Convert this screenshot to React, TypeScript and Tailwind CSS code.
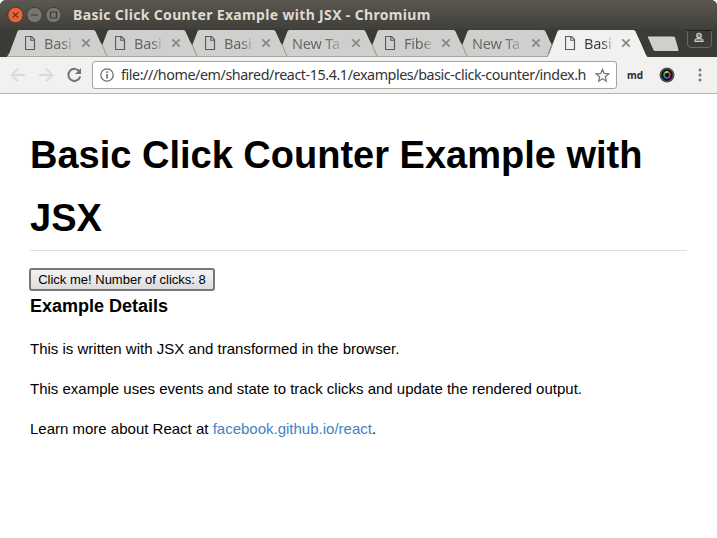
import { useState } from "react";

const tabs = [
  { title: "Basi", page: true, layer: "z-[7]" },
  { title: "Basi", page: true, layer: "z-[6]" },
  { title: "Basi", page: true, layer: "z-[5]" },
  { title: "New Ta", page: false, layer: "z-[4]" },
  { title: "Fibe", page: true, layer: "z-[3]" },
  { title: "New Ta", page: false, layer: "z-[2]" },
  { title: "Basi", page: true, active: true, layer: "z-[8]" },
];

function PageIcon() {
  return (
    <svg width="12" height="16" viewBox="0 0 12 16" fill="none" stroke="#5a5a5a" className="shrink-0">
      <path d="M.5 1.500H6.500L9.500 4.500V14.500H.5Z" strokeWidth="1.200" />
      <path d="M5.800 1.500V5.300H9.500" strokeWidth="1.100" />
    </svg>
  );
}

function Tab({ title, page, active, layer }: { title: string; page: boolean; active?: boolean; layer: string }) {
  return (
    <div className={`relative h-7 w-[90px] shrink-0 ${layer}`}>
      <svg width="104" height="28" viewBox="0 0 104 28" className="absolute left-0 top-0 max-w-none">
        <path
          d="M0 28L1.500 25L10 2.500Q11 .5 12.500 .5H86Q88 .5 89 2.500L99.500 26L101 28Z"
          fill={active ? "#f2f1f0" : "#d0cfcd"}
        />
        <path
          d="M1.500 25L10 2.500Q11 .5 12.500 .5H86Q88 .5 89 2.500L94.500 14.500"
          fill="none"
          stroke="#2b2a27"
          strokeWidth=".8"
        />
        {active ? (
          <>
            <path d="M0 28L1.500 25L5.500 14.500" fill="none" stroke="#96958f" />
            <path d="M94.500 14.500L99.500 26L101 28" fill="none" stroke="#2b2a27" strokeWidth=".8" />
          </>
        ) : (
          <>
            <path d="M94.500 14.500L99.500 26L101 28" fill="none" stroke="#96958f" />
            <path d="M0 27.500H101" stroke="#a5a4a1" />
          </>
        )}
      </svg>
      <div className={`relative flex h-7 items-center ${page ? "pl-[18px]" : "pl-[15px]"}`}>
        {page && (
          <div className="flex w-[19px] shrink-0">
            <PageIcon />
          </div>
        )}
        <span
          className={`overflow-hidden whitespace-nowrap bg-clip-text text-[14.500px] leading-5 tracking-[-0.2px] text-transparent ${page ? "w-[29px]" : "w-[51px]"} ${active ? "bg-linear-to-r from-[#3c3c3c] from-65% to-[#3c3c3c]/15" : "bg-linear-to-r from-[#656462] from-65% to-[#656462]/15"}`}
        >
          {title}
        </span>
        <svg width="10" height="10" viewBox="0 0 10 10" stroke="#888785" strokeWidth="1.700" className="ml-2 shrink-0">
          <path d="M1.300 1.300L8.700 8.700M8.700 1.300L1.300 8.700" />
        </svg>
      </div>
    </div>
  );
}

function WindowButtons() {
  return (
    <svg width="56" height="18" viewBox="0 0 56 18" fill="none" className="shrink-0">
      <circle cx="8.500" cy="9" r="7.700" fill="#ec6337" stroke="#35332f" strokeWidth=".8" />
      <circle cx="27.500" cy="9" r="7.700" fill="#76756f" stroke="#35332f" strokeWidth=".8" />
      <circle cx="46.500" cy="9" r="7.700" fill="#76756f" stroke="#35332f" strokeWidth=".8" />
      <path d="M5.800 6.300L11.200 11.700M11.200 6.300L5.800 11.700M24 9H31M43.500 6H49.500V12H43.500Z" stroke="#3a3835" strokeWidth="1.200" />
    </svg>
  );
}

export default function App() {
  const [clicks, setClicks] = useState(8);
  return (
    <div className="flex h-[538px] w-[717px] flex-col overflow-hidden bg-white">
      <header className="shrink-0 font-['Noto_Sans',sans-serif]">
        <div className="h-[57px] rounded-t-md bg-[#3c3b37]">
          <div className="flex h-[29px] items-center rounded-t-md bg-linear-to-b from-[#5b5850] to-[#403f3a] pl-[7px]">
            <WindowButtons />
            <h1 className="ml-[10px] whitespace-nowrap text-[14px] leading-5 font-bold tracking-[0.34px] text-[#dfdbd2]">
              Basic Click Counter Example with JSX - Chromium
            </h1>
          </div>
          <div className="isolate flex h-7 pl-[7px]">
            {tabs.map((t, i) => (
              <Tab key={i} {...t} />
            ))}
            <svg width="34" height="18" viewBox="0 0 34 18" className="mt-[6px] ml-[9px] shrink-0">
              <path d="M2.500 1H27Q29 1 29.500 2.500L33 15Q33.300 16.500 32 16.500H9Q7.500 16.500 7 15L1.500 2.500Q1 1 2.500 1Z" fill="#d0cfcd" stroke="#282723" strokeWidth=".8" />
            </svg>
            <svg width="25" height="20" viewBox="0 0 25 20" fill="none" className="ml-[7px] shrink-0">
              <path d="M.5 1.500V15Q.5 18.500 4 18.500H21Q24.500 18.500 24.500 15V1.500" stroke="#686762" />
              <path d="M0 1.500H25" stroke="#24231f" />
              <circle cx="12" cy="6.500" r="2.300" fill="#777671" stroke="#d0cfcd" strokeWidth="1.100" />
              <path d="M8 12.500V11.500Q8 9.500 12 9.500Q16 9.500 16 11.500V12.500Z" fill="#777671" stroke="#d0cfcd" strokeWidth="1.100" />
            </svg>
          </div>
        </div>
        <div className="flex h-[37px] items-center border-b border-[#b6b4b2] bg-[#f2f1f0]">
          <svg width="84" height="18" viewBox="0 0 84 18" fill="none" strokeWidth="1.800" className="ml-[9px] shrink-0">
            <path d="M16 9H3M9 2.700L2.700 9L9 15.300M30 9H43M37 2.700L43.300 9L37 15.300" stroke="#d9d8d7" />
            <path d="M70.400 5.500A6 6 0 1 0 71.200 10.500" stroke="#737271" strokeWidth="2" />
            <path d="M72 2V8H66Z" fill="#737271" />
          </svg>
          <div className="-ml-px flex h-7 w-[525px] shrink-0 items-center rounded-[3px] border border-[#a5a4a2] bg-white pl-[7px]">
            <svg width="14" height="14" viewBox="0 0 14 14" fill="none" stroke="#6b6b6b" className="shrink-0">
              <circle cx="7" cy="7" r="6.200" strokeWidth="1.300" />
              <path d="M7 6V10.500M7 3.300V4.900" strokeWidth="1.600" />
            </svg>
            <span className="ml-[7px] w-[468px] shrink-0 whitespace-nowrap text-[14.300px] leading-5 tracking-[-0.42px] text-[#333]">
              file:///home/em/shared/react-15.4.1/examples/basic-click-counter/index.h
            </span>
            <svg width="15" height="15" viewBox="0 0 15 15" fill="none" stroke="#777" strokeWidth="1.300" className="ml-[6px] shrink-0">
              <path d="M7.500 1.400L9.200 5.500L13.700 5.900L10.300 8.800L11.300 13.200L7.500 10.800L3.700 13.200L4.700 8.800L1.300 5.900L5.800 5.500Z" />
            </svg>
          </div>
          <span className="ml-[10px] w-4 text-[10px] leading-4 font-bold text-[#2b2b2b]">md</span>
          <svg width="16" height="16" viewBox="0 0 17 17" fill="none" className="ml-4 shrink-0">
            <circle cx="8.500" cy="8.500" r="8" fill="#505256" />
            <circle cx="8.500" cy="8.500" r="6" fill="#111" />
            <g strokeWidth="1.900">
              <path d="M5.500 9A3 3 0 0 1 6.500 6" stroke="#12cf55" />
              <path d="M6.500 6A3 3 0 0 1 10 5.600" stroke="#e5dc35" />
              <path d="M10 5.600A3 3 0 0 1 11.600 8.500" stroke="#d94431" />
              <path d="M11.600 8.500A3 3 0 0 1 9 11.600" stroke="#a52bc4" />
              <path d="M9 11.600A3 3 0 0 1 5.500 9" stroke="#168cd8" />
            </g>
          </svg>
          <svg width="4" height="14" viewBox="0 0 4 14" fill="#777" className="ml-[23px] shrink-0">
            <circle cx="2" cy="2" r="1.500" />
            <circle cx="2" cy="7" r="1.500" />
            <circle cx="2" cy="12" r="1.500" />
          </svg>
        </div>
      </header>
      <main className="px-[30px] pt-[30px] font-['Liberation_Sans',Arial,sans-serif] text-[15px] leading-[25px] text-black">
        <h1 className="mb-[15px] border-b border-[#ddd] text-[38px] leading-[63px] font-bold">
          Basic Click Counter Example with JSX
        </h1>
        <div className="-ml-px flex h-[25px] items-start pt-[2px]">
          <button
            onClick={() => setClicks(clicks + 1)}
            className="h-[23px] w-[186px] rounded-[3px] border-2 border-[#777] bg-linear-to-b from-[#f4f4f4] to-[#dcdcdc] text-[13px] leading-[19px] whitespace-nowrap"
          >
            Click me! Number of clicks: {clicks}
          </button>
        </div>
        <h4 className="mb-[15px] text-[18px] leading-[30px] font-bold">Example Details</h4>
        <p className="mb-[15px]">This is written with JSX and transformed in the browser.</p>
        <p className="mb-[15px]">This example uses events and state to track clicks and update the rendered output.</p>
        <p>
          Learn more about React at{" "}
          <a href="#" className="text-[#4183c4]">
            facebook.github.io/react
          </a>
          .
        </p>
      </main>
    </div>
  );
}
